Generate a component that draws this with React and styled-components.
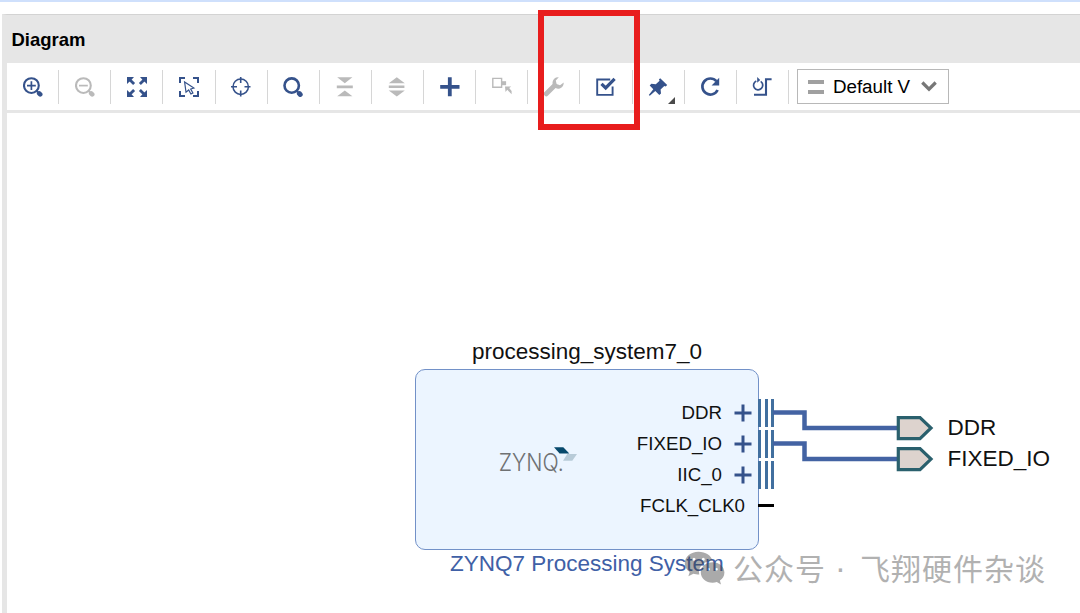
import React from "react";
import styled, { createGlobalStyle } from "styled-components";

const navy = "#35528b";
const grey = "#bababa";

const tools = [
  {
    name: "zoom-in",
    art: (
      <g fill="none" stroke={navy}>
        <circle cx="8.4" cy="8.6" r="7.4" strokeWidth="2.1" />
        <path d="M8.4 4.2v8.8M4 8.6h8.8" strokeWidth="1.7" />
        <path d="M13.5 13.7l1.6 1.6" strokeWidth="2" />
        <path d="M16.2 16.4l1 1" strokeWidth="4.6" strokeLinecap="round" />
      </g>
    )
  },
  {
    name: "zoom-out",
    art: (
      <g fill="none" stroke={grey}>
        <circle cx="8.4" cy="8.6" r="7.4" strokeWidth="2.1" />
        <path d="M4 8.6h8.8" strokeWidth="1.7" />
        <path d="M13.5 13.7l1.6 1.6" strokeWidth="2" />
        <path d="M16.2 16.4l1 1" strokeWidth="4.6" strokeLinecap="round" />
      </g>
    )
  },
  {
    name: "fit",
    art: (
      <g>
        <g fill={navy}>
          <path d="M0 0h7L5 2.2 0 7zM20 0h-7l2 2.2L20 7zM0 20h7l-2-2.2L0 13zM20 20h-7l2-2.2 5-4.8z" />
        </g>
        <path
          d="M2.5 2.5l4.6 4.6M17.5 2.5l-4.6 4.6M2.5 17.5l4.6-4.6M17.5 17.5l-4.6-4.6"
          stroke={navy}
          strokeWidth="2.8"
        />
      </g>
    )
  },
  {
    name: "select-area",
    art: (
      <g fill="none" stroke={navy}>
        <path d="M1 6V1h5M14 1h5v5M19 14v5h-5M6 19H1v-5" strokeWidth="2" />
        <path
          d="M5.6 5l1.4 10.2 2.7-2.2 2.2 4 2-1.1-2.2-3.9 3.2-1z"
          strokeWidth="1.2"
        />
      </g>
    )
  },
  {
    name: "center",
    art: (
      <g fill="none" stroke={navy}>
        <circle cx="9.7" cy="9.7" r="7.7" strokeWidth="1.5" />
        <path d="M9.7 0v6M9.7 13.5v6M0 9.7h6M13.5 9.7h6" strokeWidth="1.6" />
      </g>
    )
  },
  {
    name: "search",
    art: (
      <g fill="none" stroke={navy}>
        <circle cx="8.7" cy="8.6" r="7.2" strokeWidth="2.6" />
        <path d="M13.5 13.7l1.6 1.6" strokeWidth="2.2" />
        <path d="M16.4 16.6l.8.8" strokeWidth="5" strokeLinecap="round" />
      </g>
    )
  },
  {
    name: "collapse",
    art: (
      <path
        d="M2.2 0.2h15.2L9.8 6.2zM1.8 8.5h16v2.7h-16zM2.2 19.2h15.2L9.8 13.4z"
        fill={grey}
      />
    )
  },
  {
    name: "expand",
    art: (
      <path
        d="M1.8 6.2L9.8 0.2l8 6zM1.8 8.5h15.6v2.5H1.8zM1.8 13.4h16l-8 6z"
        fill={grey}
      />
    )
  },
  {
    name: "add-ip",
    art: <path d="M9.8 0.2v19M0.2 9.8h19.3" stroke={navy} strokeWidth="3.8" />
  },
  {
    name: "make-external",
    art: (
      <g>
        <path
          d="M0.8 1.4h8.8v8.8H0.8z"
          fill="none"
          stroke={grey}
          strokeWidth="1.4"
        />
        <path d="M9.6 4.2h4.5v4H9.6z" fill={grey} />
        <path
          d="M13 9.4h6.2L17.2 11l2.4 2.9v3.4l-4.3-4.5-1.8 2.2z"
          fill={grey}
        />
      </g>
    )
  },
  {
    name: "customize",
    art: (
      <g transform="translate(-.6 -.6)">
        <path
          d="M2.9 17.4L11.2 9.2"
          stroke={grey}
          strokeWidth="4.9"
          strokeLinecap="round"
        />
        <path
          d="M15.4.8a5.7 5.7 0 0 0-6 7.4c.5 2.5 3.2 4.6 6 4.1 2.9-.4 5-2.8 4.9-6.1l-3.7 2.7-3.4-1.3-.8-3.4z"
          fill={grey}
        />
      </g>
    )
  },
  {
    name: "validate",
    art: (
      <g fill="none" stroke={navy}>
        <path d="M14.2 2.5H1.2v15.4h15.4V9.4" strokeWidth="1.9" />
        <path d="M5.5 6.8l4.2 4.1L18.6 1.9" strokeWidth="3.2" />
      </g>
    )
  },
  {
    name: "pin",
    corner: true,
    art: (
      <g transform="translate(1 1.2)">
        <path
          d="M11.2 0l7 6.8-1.5 1.4-1.4-.5-3.7 3.6.4 4-1.7 1.6-4-4L.8 17.6l-1-.8 4.5-5.7L.7 7.2l1.6-1.6 4.5.4L10.6 2.6l-.7-1.3z"
          fill={navy}
        />
      </g>
    )
  },
  {
    name: "regenerate",
    art: (
      <g>
        <path
          d="M16.4 4.2A8 8 0 1 0 17.6 13"
          fill="none"
          stroke={navy}
          strokeWidth="2.7"
        />
        <path d="M19.2 0.8v7.6h-7.6z" fill={navy} />
      </g>
    )
  },
  {
    name: "optimize",
    art: (
      <g fill="none" stroke={navy}>
        <path d="M2 17.7h12V2.3h5.6" strokeWidth="2.1" />
        <path d="M8.7 4.4A4.6 4.6 0 1 1 4.3 4" strokeWidth="1.7" />
        <path d="M5.2 0l3 2.9-3 2.8z" fill={navy} stroke="none" />
      </g>
    )
  }
];

const ports = [
  { label: "DDR", bus: true },
  { label: "FIXED_IO", bus: true },
  { label: "IIC_0", bus: true },
  { label: "FCLK_CLK0", bus: false }
];

const Tool = ({ tool }) => (
  <ToolCell>
    <svg width="20" height="20" viewBox="0 0 20 20">
      {tool.art}
    </svg>
    {tool.corner && <Corner />}
  </ToolCell>
);

const Port = ({ label, bus }) => (
  <PortRow>
    <PortLabel>{label}</PortLabel>
    {bus && (
      <PlusIcon width="18" height="18" viewBox="0 0 18 18">
        <path d="M9 .5v17M.5 9h17" stroke={navy} strokeWidth="3" />
      </PlusIcon>
    )}
    {bus ? (
      <BusPin>
        <Bar />
        <Bar />
        <Bar />
      </BusPin>
    ) : (
      <Pin />
    )}
  </PortRow>
);

const ZynqLogo = () => (
  <svg width="84" height="34" viewBox="-2 0 84 34">
    <text
      x="-0.3"
      y="26"
      fontFamily="Inter, sans-serif"
      fontWeight="300"
      fontSize="24"
      textLength="65"
      lengthAdjust="spacingAndGlyphs"
      fill="#6f7173"
    >
      ZYNQ.
    </text>
    <path d="M55 2.3h9.3l6 6.2h-9.7z" fill="#07496c" />
    <path d="M68.3 9H78l-4.7 6.7H64z" fill="#b8cbd8" />
  </svg>
);

const WeChatIcon = () => (
  <svg width="42" height="35" viewBox="0 0 42 35">
    <path
      fill="#444"
      fillRule="evenodd"
      d="M14.5.8C6.6.8.8 5.9.8 12.2c0 3.6 1.9 6.7 4.9 8.8l-1.3 4.3 5-2.5c1.8.5 3.5.8 5.9.8-1.8-7.3 4.4-14 13.1-13.8C27.3 4.6 21.6.8 14.5.8zM10 6.8a1.5 1.5 0 1 1 0 3 1.5 1.5 0 0 1 0-3zm9.3 0a1.5 1.5 0 1 1 0 3 1.5 1.5 0 0 1 0-3z"
    />
    <path
      fill="#444"
      fillRule="evenodd"
      d="M28.6 11.2c-6.7 0-11.8 4.6-11.8 10.2s5.1 10.3 11.8 10.3c1.5 0 2.9-.2 4.2-.6l4.2 2.3-1.1-3.8c2.7-1.9 4.5-4.8 4.5-8.2 0-5.6-5.2-10.2-11.8-10.2zm-4 5.8a1.3 1.3 0 1 1 0 2.6 1.3 1.3 0 0 1 0-2.6zm7.9 0a1.3 1.3 0 1 1 0 2.6 1.3 1.3 0 0 1 0-2.6z"
    />
  </svg>
);

export default () => (
  <Page>
    <GlobalStyle />
    <Panel>
      <PanelTitle>Diagram</PanelTitle>
      <Toolbar>
        {tools.map(tool => (
          <Tool key={tool.name} tool={tool} />
        ))}
        <ViewSelect>
          <Lines />
          <ViewName>Default V</ViewName>
          <svg width="16" height="11" viewBox="0 0 16 11">
            <path
              d="M1.3 1.5L8 8.2l6.7-6.7"
              fill="none"
              stroke="#777"
              strokeWidth="3.2"
            />
          </svg>
        </ViewSelect>
      </Toolbar>
      <Canvas>
        <CanvasText $x={465} $y={226}>
          processing_system7_0
        </CanvasText>
        <Block>
          <Logo>
            <ZynqLogo />
          </Logo>
          <Ports>
            {ports.map(port => (
              <Port key={port.label} {...port} />
            ))}
          </Ports>
        </Block>
        <Wires width="170" height="90" viewBox="0 0 170 90">
          <g fill="none" stroke="#4363a3" strokeWidth="4.5">
            <path d="M0 18.5H31.5V34H125" />
            <path d="M0 49.5H31.5V65H125" />
          </g>
          <g fill="#ddd3ce" stroke="#2a606d" strokeWidth="3.2">
            <path d="M125.3 23.6h21.7l11 10.4-11 10.6h-21.7z" />
            <path d="M125.3 54.7h21.7l11 10.4-11 10.6h-21.7z" />
          </g>
        </Wires>
        <CanvasText $x={940.5} $y={302}>
          DDR
        </CanvasText>
        <CanvasText $x={940.5} $y={333}>
          FIXED_IO
        </CanvasText>
        <CanvasText $x={443} $y={438} $color="#4060a6">
          ZYNQ7 Processing System
        </CanvasText>
        <Watermark>
          <WeChatIcon />
          <Account>公众号</Account>
          <Dot>·</Dot>
          <Account>飞翔硬件杂谈</Account>
        </Watermark>
      </Canvas>
    </Panel>
    <Highlight />
  </Page>
);

const GlobalStyle = createGlobalStyle`
  body {
    margin: 0;
    background: #fff;
    font-family: "Liberation Sans", Arial, sans-serif;
    overflow: hidden;
  }

  svg {
    display: block;
    flex: none;
  }
`;

const Page = styled.div`
  position: relative;
  box-sizing: border-box;
  width: 1080px;
  height: 613px;
  padding: 12px 0 0 2px;
  border-top: 2px solid #cfe0fc;
  overflow: hidden;
`;

const Panel = styled.div`
  display: flex;
  flex-direction: column;
  box-sizing: border-box;
  height: 599px;
  border-top: 1px solid #d3d3d3;
  border-left: 5px solid #e6e6e6;
`;

const PanelTitle = styled.div`
  box-sizing: border-box;
  height: 48px;
  padding-left: 4.5px;
  background: #e6e6e6;
  color: #000;
  font-size: 18.5px;
  font-weight: bold;
  line-height: 50px;
`;

const Toolbar = styled.div`
  display: flex;
  align-items: center;
  box-sizing: border-box;
  height: 50px;
  border-bottom: 3px solid #e6e6e6;
`;

const ToolCell = styled.div`
  position: relative;
  display: flex;
  align-items: center;
  justify-content: center;
  box-sizing: border-box;
  width: 52.13px;
  height: 34px;
  border-right: 1px solid #d6d6d6;
`;

const Corner = styled.div`
  position: absolute;
  right: 9px;
  bottom: 0;
  border-left: 7px solid transparent;
  border-bottom: 7px solid #4a4a4a;
`;

const ViewSelect = styled.div`
  display: flex;
  align-items: center;
  box-sizing: border-box;
  width: 152px;
  height: 35px;
  margin-left: 8px;
  padding-left: 10px;
  border: 1px solid #b8b8b8;
`;

const Lines = styled.div`
  box-sizing: border-box;
  width: 16px;
  height: 14px;
  border: solid #a0a0a0;
  border-width: 4px 0;
`;

const ViewName = styled.div`
  width: 79px;
  margin: 0 9px;
  font-size: 18.8px;
  line-height: 24px;
  white-space: nowrap;
`;

const Canvas = styled.div`
  position: relative;
  flex: 1;
`;

const CanvasText = styled.div`
  position: absolute;
  left: ${props => props.$x}px;
  top: ${props => props.$y}px;
  color: ${props => props.$color || "#111"};
  font-size: 22.5px;
  line-height: 26px;
  white-space: nowrap;
`;

const Block = styled.div`
  position: absolute;
  left: 408px;
  top: 256px;
  display: flex;
  justify-content: space-between;
  box-sizing: border-box;
  width: 344px;
  height: 181px;
  border: 1px solid #7291c8;
  border-radius: 10px;
  background: #ecf5ff;
`;

const Logo = styled.div`
  padding: 75px 0 0 81px;
`;

const Ports = styled.div`
  padding-top: 27px;
  margin-right: -16px;
`;

const PortRow = styled.div`
  display: flex;
  align-items: center;
  justify-content: flex-end;
  height: 31.1px;
`;

const PortLabel = styled.div`
  color: #111;
  font-size: 18.7px;
  line-height: 28px;
`;

const PlusIcon = styled.svg`
  margin: 0 6px 0 12px;
`;

const BusPin = styled.div`
  display: flex;
  justify-content: space-between;
  width: 16px;
  height: 28px;
`;

const Bar = styled.div`
  width: 3px;
  background: #416f9f;
`;

const Pin = styled.div`
  width: 16px;
  height: 3px;
  margin-left: 13px;
  background: #000;
`;

const Wires = styled.svg`
  position: absolute;
  left: 766px;
  top: 281px;
`;

const Watermark = styled.div`
  position: absolute;
  left: 677px;
  top: 435px;
  display: flex;
  align-items: center;
  opacity: 0.45;

  svg {
    margin-top: 3px;
  }
`;

const Account = styled.div`
  margin-left: 7px;
  color: #555;
  font-family: "Noto Sans CJK SC", sans-serif;
  font-size: 30px;
  line-height: 38px;
  letter-spacing: 1px;
`;

const Dot = styled.div`
  width: 25px;
  padding-left: 2px;
  color: #555;
  font-family: "Liberation Sans", sans-serif;
  font-size: 34px;
  line-height: 38px;
  text-align: center;
`;

const Highlight = styled.div`
  position: absolute;
  left: 538px;
  top: 8px;
  box-sizing: border-box;
  width: 102px;
  height: 120px;
  border: 6px solid #e81d1d;
`;
